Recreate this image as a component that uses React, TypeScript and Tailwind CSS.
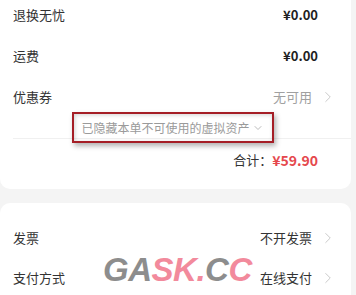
import React from 'react'
import { ChevronRight, ChevronDown } from 'lucide-react'

const font = { fontFamily: '"Noto Sans CJK SC", "Noto Sans", sans-serif' }

const Arrow = () => <ChevronRight size={18} strokeWidth={1.3} className="text-[#c8c8c8] shrink-0" />

const PriceRow = ({ label, value }: { label: string; value: string }) => (
  <div className="h-[41px] flex items-start justify-between pt-[6px] pl-[13px] pr-[33px]">
    <span className="text-[13px] leading-[18px] text-[#333]">{label}</span>
    <span className="text-[13px] leading-[18px] font-semibold text-[#1f1f1f]">{value}</span>
  </div>
)

const LinkRow = ({ label, value, muted }: { label: string; value: string; muted?: boolean }) => (
  <div className="h-[40px] flex items-center justify-between pl-[13px] pr-[14px]">
    <span className="text-[13px] leading-[18px] text-[#333]">{label}</span>
    <div className="flex items-center gap-[7px]">
      <span className={`text-[13px] leading-[18px] ${muted ? 'text-[#a0a0a0]' : 'text-[#333]'}`}>{value}</span>
      <Arrow />
    </div>
  </div>
)

export default function App() {
  return (
    <div className="w-[356px] h-[295px] overflow-hidden bg-[#f4f4f4]" style={font}>
      {/* order summary card */}
      <div className="relative w-[351px] bg-white rounded-b-[10px] pb-[8px]">
        <PriceRow label="退换无忧" value="¥0.00" />
        <PriceRow label="运费" value="¥0.00" />
        <div className="h-[36px] flex items-start justify-between pt-[6px] pl-[13px] pr-[14px]">
          <span className="text-[13px] leading-[18px] text-[#333]">优惠券</span>
          <div className="flex items-center gap-[7px]">
            <span className="text-[13px] leading-[18px] text-[#a0a0a0]">无可用</span>
            <Arrow />
          </div>
        </div>
        <div className="h-[20px] flex items-center justify-center gap-[2px] pr-[6px]">
          <span className="text-[12px] leading-[18px] text-[#9a9a9a]">已隐藏本单不可使用的虚拟资产</span>
          <ChevronDown size={12} strokeWidth={1.6} className="text-[#aaa]" />
        </div>
        <div className="ml-[13px] border-t border-[#f0f0f0]" />
        <div className="h-[42px] flex items-center justify-end pr-[33px]">
          <span className="text-[13px] text-[#333]">合计：</span>
          <span className="text-[14px] font-bold text-[#e5484d]">¥59.90</span>
        </div>

        {/* annotation box */}
        <div className="absolute left-[72px] top-[112px] w-[202px] h-[31px] border-[2.5px] border-[#a51e26] shadow-[2px_3px_5px_rgba(0,0,0,0.3),inset_1px_1px_4px_rgba(0,0,0,0.18)]" />
      </div>

      {/* invoice / payment card */}
      <div className="relative mt-[14px] w-[351px] bg-white rounded-t-[10px] pt-[15px] pb-[20px]">
        <LinkRow label="发票" value="不开发票" />
        <LinkRow label="支付方式" value="在线支付" />

        {/* watermark */}
        <div
          className="absolute left-[103px] top-[47px] text-[33px] leading-[40px] font-black italic tracking-[-0.5px] select-none"
          style={{ fontFamily: '"Liberation Sans", Arial, sans-serif' }}
        >
          <span className="text-[#8d8d8d]">G</span>
          <span className="text-[#8d8d8d]">A</span>
          <span className="text-[#f28a9c]">S</span>
          <span className="text-[#f28a9c]">K</span>
          <span className="text-[#f28a9c]">.</span>
          <span className="text-[#8d8d8d]">C</span>
          <span className="text-[#f28a9c]">C</span>
        </div>
      </div>
    </div>
  )
}
